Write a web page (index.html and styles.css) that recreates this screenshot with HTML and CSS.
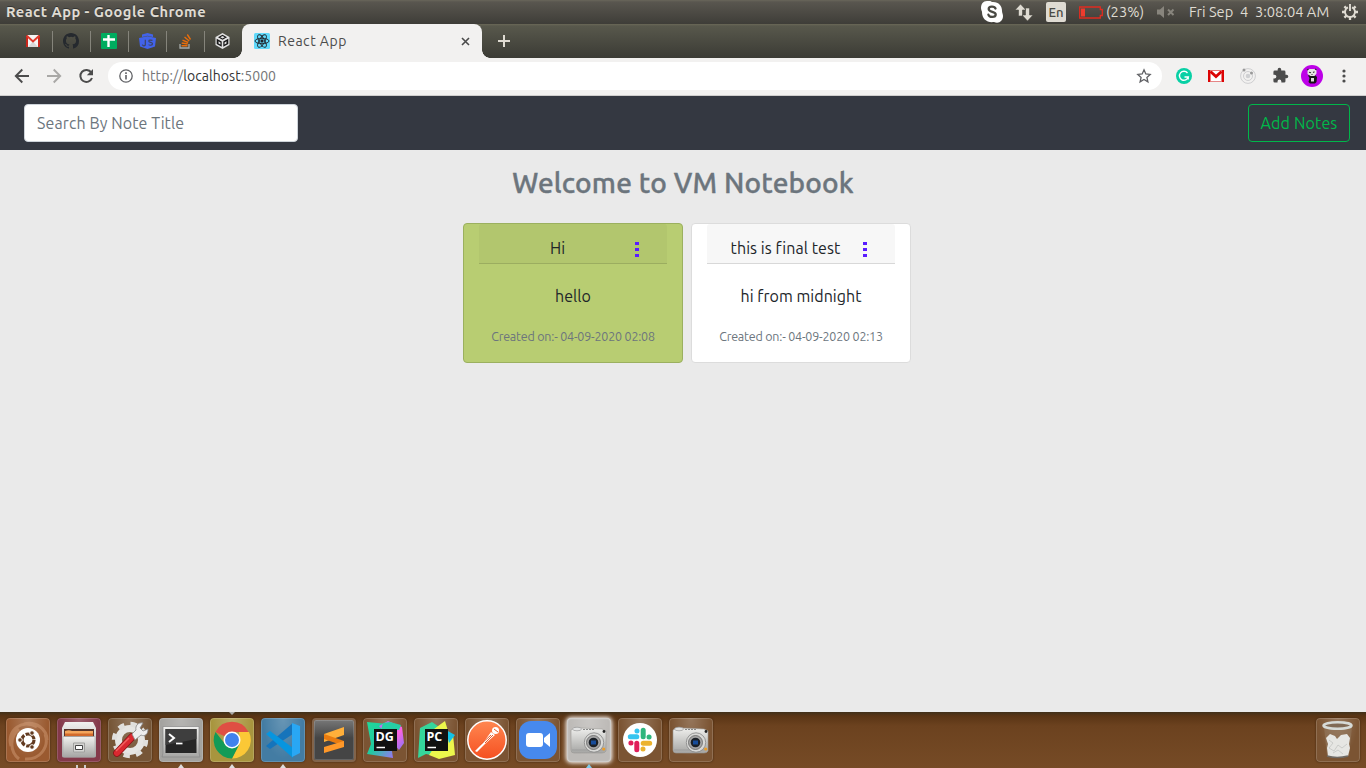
FILE: index.html
```html
<!DOCTYPE html>
<html lang="en">
<head>
<meta charset="utf-8">
<title>React App</title>
<link rel="stylesheet" href="styles.css">
</head>
<body>
<header class="panel">
  <span class="window-title">React App - Google Chrome</span>
  <div class="tray">
    <svg class="tray-skype" width="22" height="22" viewBox="0 0 22 22"><path d="M6 0c3-1 4 1 6 1 6 0 9 4 9 9 0 2 1 3 1 5 0 5-4 8-9 6-7 1-12-3-12-10 0-1-1-2-1-4C0 3 2 0 6 0Z" fill="#fff"/><path d="M14.500 7.500C13.500 4.800 7.700 4.900 7.700 8c0 3.600 7 2.200 7 5.500 0 3.200-6.400 3.300-7.300.2" fill="none" stroke="#4a4943" stroke-width="2.300" stroke-linecap="round"/></svg>
    <svg class="tray-net" width="18" height="17" viewBox="0 0 18 17"><path d="M5.500 0 11 6H7.500v6h-4V6H0ZM12.500 17 7 11h3.500V4h4v7H18Z" fill="#dfdbd2" stroke="#4b4943" stroke-width=".6"/></svg>
    <span class="lang">En</span>
    <svg class="tray-battery" width="24" height="13" viewBox="0 0 24 13"><path d="M.7 1h20.600v2.500H23.300v6H21.300V12H.7Z" fill="none" stroke="#e02b20" stroke-width="1.300"/><path d="M2 2.500h4v8H2z" fill="#ed3b2d"/></svg>
    <span class="percent">(23%)</span>
    <svg class="tray-sound" width="18" height="12" viewBox="0 0 18 12"><path d="M0 3.500h3L7 0v12L3 8.500H0Z" fill="#88857d"/><path d="m11 3.500 5.500 5.500m0-5.500L11 9" stroke="#88857d" stroke-width="2"/></svg>
    <span class="clock">Fri Sep  4  3:08:04 AM</span>
    <svg class="tray-gear" width="16" height="16" viewBox="-8 -8 16 16" fill="none" stroke="#dfdbd2"><path d="M-2-4.600A5 5 0 1 0 2-4.600" stroke-width="1.900"/><path d="M0-8v7" stroke-width="1.900"/><path d="M5 0h3M-5 0h-3M0 5v3M3.600 3.600l2 2M-3.600 3.600l-2 2M3.600-3.600l2-2M-3.600-3.600l-2-2" stroke-width="2.300"/></svg>
  </div>
</header>

<nav class="tabs">
  <span class="pin"><svg width="14" height="12" viewBox="0 0 14 12"><path d="M1 0h12v12H1z" fill="#f4f4f4"/><path d="m2 12 5-5.500 5 5.500" fill="#d8d8d8"/><path d="M0 .5h2V12H0zM12 .5h2V12h-2z" fill="#c9271c"/><path d="m.8.800 6.200 5.700L13.200.8" fill="none" stroke="#e0392b" stroke-width="2"/></svg></span>
  <span class="pin"><svg width="16" height="16" viewBox="0 0 16 16"><path fill="#25292e" d="M8 0C3.580 0 0 3.580 0 8c0 3.540 2.290 6.530 5.470 7.590.4.070.55-.17.55-.38 0-.19-.01-.82-.01-1.490-2.010.37-2.530-.49-2.690-.94-.09-.23-.48-.94-.82-1.130-.28-.15-.68-.52-.01-.53.63-.01 1.080.58 1.230.82.72 1.210 1.870.87 2.330.66.07-.52.28-.87.51-1.070-1.780-.2-3.640-.89-3.640-3.950 0-.87.31-1.590.82-2.150-.08-.2-.36-1.020.08-2.120 0 0 .67-.21 2.200.82a7.500 7.500 0 0 1 4 0c1.530-1.040 2.200-.82 2.200-.82.44 1.100.16 1.920.08 2.120.51.56.82 1.270.82 2.150 0 3.070-1.870 3.750-3.650 3.950.29.25.54.73.54 1.480 0 1.070-.01 1.930-.01 2.200 0 .21.15.46.55.38A8 8 0 0 0 16 8c0-4.420-3.580-8-8-8Z"/></svg></span>
  <span class="pin"><svg width="16" height="16" viewBox="0 0 16 16"><rect width="16" height="16" rx="1" fill="#00ac5f"/><path d="M2 6.500h12M7.500 2v12" stroke="#fff" stroke-width="2.400"/></svg></span>
  <span class="pin"><svg width="17" height="16" viewBox="0 0 17 16"><path d="M3 1.500 8.500 0 14 1.500V4L8.500 2.800 3 4ZM0 5l8.500-1.700L17 5l-1 8.500L8.500 16 1 13.500Z" fill="#4263eb"/><path d="M6.300 6.800v5.200q-1.500 1.800-3-.3M13.500 7.300q-3.700-.8-3.700 1c0 1.700 3.700.5 3.700 2.400 0 1.800-2.700 1.900-3.900.9" fill="none" stroke="#3e4664" stroke-width="1.200"/></svg></span>
  <span class="pin"><svg width="13" height="16" viewBox="0 0 13 16" fill="none"><path d="M1 11v4h9v-4" stroke="#a5aaa9" stroke-width="1.300"/><path d="M2.500 12.700h6M2.700 10l6 1M3.500 7.200l5.700 2.300M5.500 4l4.700 4M8.300 1.500l3.200 5" stroke="#e86d0b" stroke-width="1.400"/></svg></span>
  <span class="pin"><svg width="15" height="16" viewBox="0 0 15 16"><path d="m7.500 0 7 4v8l-7 4-7-4V4Z" fill="#e2e2e2"/><path d="m7.500 1.800 4.500 2.500-4.500 2.400L3 4.300Z" fill="#171717"/><path d="m7.500 3 2.200 1.300-2.200 1.200-2.200-1.200Z" fill="#e2e2e2"/><path d="m1.700 5.800 5 2.700v5.300l-5-2.800ZM13.300 5.800l-5 2.700v5.300l5-2.800Z" fill="#171717"/><path d="m3.500 8.300 2 1.200v2l-2-1.100ZM11.500 8.300l-2 1.200v2l2-1.100Z" fill="#e2e2e2"/></svg></span>
  <div class="tab">
    <svg width="16" height="16" viewBox="-8 -8 16 16" fill="none" stroke="#20232a" stroke-width=".9"><rect x="-8" y="-8" width="16" height="16" rx="1.500" fill="#61dafb" stroke="none"/><ellipse rx="7" ry="2.700"/><ellipse rx="7" ry="2.700" transform="rotate(60)"/><ellipse rx="7" ry="2.700" transform="rotate(120)"/><circle r="1.200" fill="#20232a"/></svg>
    <span class="tab-name">React App</span>
    <svg class="close" width="9" height="9" viewBox="0 0 9 9"><path d="m1 1 7 7m0-7L1 8" stroke="#4b4b4b" stroke-width="1.600"/></svg>
  </div>
  <svg class="plus" width="12" height="12" viewBox="0 0 12 12"><path d="M0 6h12M6 0v12" stroke="#dfdbd2" stroke-width="2"/></svg>
</nav>

<div class="toolbar">
  <span class="tool"><svg width="16" height="16" viewBox="0 0 16 16"><path d="M15 8H2m6.300-6.500L1.800 8l6.500 6.500" fill="none" stroke="#4c4c4c" stroke-width="1.900"/></svg></span>
  <span class="tool"><svg width="16" height="16" viewBox="0 0 16 16"><path d="M1 8h13M7.700 1.500 14.200 8l-6.500 6.500" fill="none" stroke="#a9a8a6" stroke-width="1.900"/></svg></span>
  <span class="tool"><svg width="16" height="16" viewBox="0 0 16 16"><path d="M13.300 4.500A6 6 0 1 0 14 10" fill="none" stroke="#4c4c4c" stroke-width="2"/><path d="M15 1v6.200H8.800Z" fill="#4c4c4c"/></svg></span>
  <div class="omnibox">
    <svg width="14" height="14" viewBox="0 0 14 14"><circle cx="7" cy="7" r="6.200" fill="none" stroke="#5f6064" stroke-width="1.300"/><path d="M7 6v4.500M7 3.300v1.600" stroke="#5f6064" stroke-width="1.600"/></svg>
    <span class="url">http://<b>localhost</b>:5000</span>
    <svg class="star" width="16" height="16" viewBox="0 0 16 16"><path d="m8 1.800 1.800 4.100 4.400.5-3.300 3 1 4.400L8 11.500l-3.900 2.300 1-4.400-3.300-3 4.400-.5Z" fill="none" stroke="#5f6064" stroke-width="1.300"/></svg>
  </div>
  <span class="tool"><svg width="16" height="16" viewBox="0 0 16 16"><circle cx="8" cy="8" r="8" fill="#08d0a5"/><path d="M11.500 5A4.500 4.500 0 1 0 12.300 9H8.500m3.700-.5v3" fill="none" stroke="#fff" stroke-width="1.400"/></svg></span>
  <span class="tool"><svg width="16" height="12" viewBox="0 0 16 12"><path d="M0 0h16v12H0z" fill="#fff"/><path d="M0 0h2.500v12H0zM13.500 0H16v12h-2.500z" fill="#dc0404"/><path d="m2.500 1.500 5.500 5 5.500-5" fill="none" stroke="#dc0404" stroke-width="2.800"/><path d="M2 .5h12M2.500 11.600h11" stroke="#e06a6a" stroke-width=".9"/></svg></span>
  <span class="tool"><svg width="16" height="16" viewBox="0 0 16 16"><g fill="none" stroke="#ceced0"><circle cx="8" cy="8" r="7.400"/><circle cx="8" cy="8" r="4.500"/></g><circle cx="8" cy="8" r="2.300" fill="#cfd0d2"/><circle cx="4" cy="2" r="1.500" fill="#999"/><circle cx="11.500" cy="5" r="1.500" fill="#999"/></svg></span>
  <span class="tool"><svg width="17" height="17" viewBox="0 0 24 24"><path fill="#4c4c4c" d="M20.500 11H19V7a2 2 0 0 0-2-2h-4V3.500a2.500 2.500 0 0 0-5 0V5H4a2 2 0 0 0-2 2v3.800h1.500a2.700 2.700 0 0 1 0 5.400H2V20a2 2 0 0 0 2 2h3.800v-1.500a2.700 2.700 0 0 1 5.400 0V22H17a2 2 0 0 0 2-2v-4h1.500a2.500 2.500 0 0 0 0-5Z"/></svg></span>
  <span class="tool"><svg width="22" height="22" viewBox="0 0 22 22"><circle cx="11" cy="11" r="11" fill="#bd00e8"/><path d="M7 10.500 8.500 10H14l2 2-.5 5L14 18.500H9L7.500 17l1-4Z" fill="#151515"/><path d="M6.500 5.500 8.500 4h5l2 1.500v3L13.500 11h-4l-3-2Z" fill="#e4e4e4"/><path d="M10 13h3v3.500h-3Z" fill="#ddd"/><path d="m8 7.200 2 .6M13.500 6.700l-1.500.7M10.500 9.500h1M6 5l1.500-1M14 4l1.500.8" stroke="#333" stroke-width="1.100"/></svg></span>
  <span class="tool more"><svg width="4" height="14" viewBox="0 0 4 14"><g fill="#4c4c4c"><circle cx="2" cy="2" r="1.600"/><circle cx="2" cy="7" r="1.600"/><circle cx="2" cy="12" r="1.600"/></g></svg></span>
</div>

<div class="navbar">
  <input class="search" type="text" placeholder="Search By Note Title">
  <button class="add">Add Notes</button>
</div>

<main class="page">
  <h1 class="heading"><span>Welcome to VM Notebook</span></h1>
  <section class="notes">
    <article class="note green">
      <div class="note-head"><span class="note-title">Hi</span><span class="dots"><i></i><i></i><i></i></span></div>
      <p class="note-body">hello</p>
      <p class="note-date">Created on:- 04-09-2020 02:08</p>
    </article>
    <article class="note">
      <div class="note-head"><span class="note-title">this is final test</span><span class="dots"><i></i><i></i><i></i></span></div>
      <p class="note-body">hi from midnight</p>
      <p class="note-date">Created on:- 04-09-2020 02:13</p>
    </article>
  </section>
</main>

<footer class="dock">
  <svg width="0" height="0" class="defs">
    <defs>
      <linearGradient id="silver" x2="0" y2="1"><stop stop-color="#f1f1ef"/><stop offset="1" stop-color="#a5a5a3"/></linearGradient>
      <linearGradient id="mint" x2="1" y2="1"><stop stop-color="#20d99a"/><stop offset=".5" stop-color="#21c9a0"/><stop offset="1" stop-color="#9875f4"/></linearGradient>
      <linearGradient id="pink" x2="1" y2="1"><stop stop-color="#b66cf4"/><stop offset=".6" stop-color="#fb62e1"/><stop offset="1" stop-color="#8376f8"/></linearGradient>
      <linearGradient id="orange" x2="0" y2="1"><stop stop-color="#ff8751"/><stop offset="1" stop-color="#f55021"/></linearGradient>
      <symbol id="camera" viewBox="0 0 38 30">
        <path d="M1 5q5-4 9-2l22 1 4 2v20q-1 2-4 2H4q-3 0-3-3Z" fill="url(#silver)" stroke="#9b9996" stroke-width=".6"/>
        <path d="M2 25h33" stroke="#999" stroke-width=".8"/><ellipse cx="7" cy="4" rx="4.500" ry="1.800" fill="#e2e2e2" stroke="#999" stroke-width=".7"/><path d="M13 4.500h12" stroke="#888" stroke-dasharray="2 1"/>
        <circle cx="24" cy="17.500" r="9.700" fill="#d8d8d6" stroke="#858585" stroke-width=".8"/><circle cx="23.500" cy="17.500" r="7" fill="#a5a5a5" stroke="#666" stroke-width=".8"/><circle cx="23.500" cy="17.500" r="4.800" fill="#1b2027"/><path d="M21 15.500h5v4h-5z" fill="#164c9b"/><circle cx="34" cy="6.500" r="1.400" fill="#222"/><circle cx="33.700" cy="24" r="1.600" fill="#ed9d26"/>
      </symbol>
    </defs>
  </svg>
  <span class="tile ubuntu"><svg width="44" height="44" viewBox="0 0 44 44"><g fill="none" stroke="#d6a27c" stroke-width="3" opacity=".45"><path d="M5 28C0 12 17 0 31 9M13 41C3 33 4 18 13 11M39 16c5 14-6 26-20 25M18 6c12-3 23 5 23 16"/></g><circle cx="22" cy="22" r="12" fill="#fff"/><circle cx="22" cy="22" r="6" fill="none" stroke="#623a20" stroke-width="3.200" stroke-dasharray="11 1.570"/><g fill="#623a20" stroke="#fff"><circle cx="14" cy="22" r="2.300"/><circle cx="26" cy="15" r="2.300"/><circle cx="26" cy="29" r="2.300"/></g></svg></span>
  <span class="tile files"><svg width="44" height="44" viewBox="0 0 44 44"><path d="M8 4h28l3 6v28q0 1.500-2 1.500H7q-2 0-2-1.500V10Z" fill="url(#silver)"/><path d="M7 11h30v8H7Z" fill="#57352a"/><path d="M8 13q4-1.500 7 0h21v5H8Z" fill="#f4a65d"/><path d="M8 15.500h28V18H8Z" fill="#d26a2c"/><path d="M6 18.500h32V38q0 1-2 1H8q-2 0-2-1Z" fill="url(#silver)" stroke="#aaa" stroke-width=".6"/><path d="M16.500 25h11v9h-11z" fill="#d5d5d3" stroke="#a0a09e"/><path d="M18.500 27.500h7v4h-7z" fill="#fff" stroke="#444"/></svg></span>
  <span class="tile settings"><svg width="44" height="44" viewBox="0 0 44 44"><circle cx="22" cy="22" r="11.500" fill="none" stroke="#e6e6e3" stroke-width="7"/><circle cx="22" cy="22" r="15.700" fill="none" stroke="#e0e0dd" stroke-width="5" stroke-dasharray="6.200 6.130"/><path d="m9 35 15-16" stroke="#8b1015" stroke-width="7.500" stroke-linecap="round"/><path d="m9 35 15-16" stroke="#da2930" stroke-width="6" stroke-linecap="round"/><path d="m8 33 13-13" stroke="#f16360" stroke-width="1.500"/><path d="m24 16 4-4c-1-4 2-8 7-7l-3 5 3 3 5-2c0 5-3 8-7 6l-6 5Z" fill="#eee" stroke="#888" stroke-width=".8"/></svg></span>
  <span class="tile terminal up"><svg width="44" height="44" viewBox="0 0 44 44"><path d="M4 8.500h36V35l1 4H3l1-4Z" fill="url(#silver)" stroke="#888" stroke-width=".7"/><path d="M6.500 11h31v24h-31Z" fill="#262626"/><path d="M6.500 11h31v10l-31 6Z" fill="#3e3e3e"/><path d="m10 16 5 4-5 4" fill="none" stroke="#fff" stroke-width="2"/><path d="M17 25.500h6.500" stroke="#fff" stroke-width="1.700"/></svg></span>
  <span class="tile chrome up"><svg width="44" height="44" viewBox="-22 -22 44 44"><path d="M-16.500-8A18.500 18.500 0 0 1 16.500-8H0l-8 4Z" fill="#df4f43"/><path d="M17-8A18.500 18.500 0 0 1 0 18.500L7.500 4 7-8Z" fill="#fbc836"/><path d="M-16.500-8A18.500 18.500 0 0 0 0 18.500L7 5-7 4Z" fill="#129b57"/><circle r="8.500" fill="#fff"/><circle r="7" fill="#4182ed"/></svg></span>
  <span class="tile code up"><svg width="44" height="44" viewBox="0 0 44 44"><path d="m5 28 27-23v11L9 31Z" fill="#1674bb"/><path d="m5 16 4-3 23 17v10Z" fill="#0795df"/><path d="m31 5 8 3v27l-8 4Z" fill="#29a7f4"/></svg></span>
  <span class="tile sublime"><svg width="44" height="44" viewBox="0 0 44 44"><path d="m12 16 20-7v8l-20 7Z" fill="#ffaf3a"/><path d="m12 16 20 7v5l-20-7Z" fill="#e97b10"/><path d="m12 29 20-6v6l-20 6Z" fill="#ff9829"/></svg></span>
  <span class="tile"><svg width="44" height="44" viewBox="0 0 44 44"><path d="m4 4 21 2 5 34-26-4 4-10Z" fill="url(#mint)"/><path d="m16 8 9-5 14 6 2 16-5 7Z" fill="url(#pink)"/><path d="m20 5 7-1 11 3-2 5H18Z" fill="#25cfa4"/><path d="M11 11h23v22H11z" fill="#111"/><path d="M13.500 29.500H22" stroke="#fff" stroke-width="1.500"/><text x="12.500" y="23" class="logo-text">DG</text></svg></span>
  <span class="tile"><svg width="44" height="44" viewBox="0 0 44 44"><path d="m6 10 12-6 13 9-6 26-13-3-8 4Z" fill="#35d69b"/><path d="m20 11 11-8 3 10ZM30 15l9 1 2 21-16 4-10-4Z" fill="#ecf64c"/><path d="m32 12 9 5-6 8Z" fill="#12c3e8"/><path d="M11 11h23v22H11z" fill="#111"/><path d="M13.500 29.500H22" stroke="#fff" stroke-width="1.500"/><text x="12.500" y="23" class="logo-text">PC</text></svg></span>
  <span class="tile"><svg width="44" height="44" viewBox="0 0 44 44"><circle cx="22" cy="22" r="19.200" fill="url(#orange)" stroke="#fff" stroke-width="1.500"/><circle cx="30.500" cy="12.500" r="3.500" fill="#fff"/><path d="m26 14 4 3-10 9-8 8-2-1 8-8Z" fill="#fff"/><path d="m15 27 11-10m-6 8 8-8M29 11l4 3" stroke="#e55b2b"/></svg></span>
  <span class="tile"><svg width="44" height="44" viewBox="0 0 44 44"><rect x="3" y="3" width="38" height="38" rx="12" fill="#4789ed"/><rect x="10" y="15" width="17" height="14" rx="3" fill="#fff"/><path d="m28 20 6-5v14l-6-5Z" fill="#fff"/></svg></span>
  <span class="tile active up"><svg width="38" height="30"><use href="#camera"/></svg></span>
  <span class="tile"><svg width="44" height="44" viewBox="-22 -22 44 44"><circle r="17" fill="#fff"/><g stroke-width="5" stroke-linecap="round"><path d="M-3.200-3.200h-6.500M-3-9v-.1" stroke="#36c5f0"/><path d="M3.200-3.200v-6.500M9-3h.1" stroke="#2eb67d"/><path d="M3.200 3.200h6.500M3 9v.1" stroke="#ecb22e"/><path d="M-3.200 3.200v6.500M-9 3h-.1" stroke="#e01e5a"/></g></svg></span>
  <span class="tile"><svg width="38" height="30"><use href="#camera"/></svg></span>
  <span class="tile trash"><svg width="44" height="44" viewBox="0 0 44 44"><path d="m8 9 3 29q11 3 22 0l3-29Z" fill="#a08b76" opacity=".35"/><path d="m10 20 4-4 5 2 2 3 4-4 6-1 3 4-1 6 1 4-2 8q-10 3-20 0l-1-8 1-4Z" fill="#e6e6e3"/><path d="m13 22 4 3-4 5 5 3 4-6 4 3 5-4M17 35l5-3 5 4" fill="none" stroke="#c3c4c1" stroke-width=".8"/><ellipse cx="21.500" cy="7.500" rx="14" ry="3.200" fill="#806a56" stroke="#d6dad7" stroke-width="2.500"/><path d="M11 38q10 3 21 0" stroke="#6f6a65" stroke-width="1.500" fill="none"/></svg></span>
</footer>
</body>
</html>
```
FILE: styles.css
```css
* { box-sizing: border-box; }
body { margin: 0; width: 1366px; height: 768px; overflow: hidden; display: flex; flex-direction: column; background: #eaeaea; font-family: Ubuntu, "Noto Sans", sans-serif; }
svg { display: block; flex: none; }
span, button { white-space: nowrap; }

.panel { height: 24px; flex: none; display: flex; align-items: center; justify-content: space-between; padding: 0 8px 0 6px; background: linear-gradient(#69665a 0, #59564f 2px, #3e3d38 24px); color: #dfdbd2; font-size: 14.670px; line-height: 24px; }
.window-title { font-weight: 700; letter-spacing: .45px; text-shadow: 0 -1px #333; }
.tray { display: flex; align-items: center; height: 24px; }
.tray-net { margin-left: 12px; }
.lang { width: 20px; height: 20px; margin-left: 13px; border-radius: 2px; background: #dfdbd2; color: #4a4943; font-size: 13px; font-weight: 500; line-height: 21px; text-align: center; }
.tray-battery { margin-left: 13px; }
.percent { width: 38px; margin-left: 3px; }
.tray-sound { margin-left: 13px; }
.clock { width: 140px; margin-left: 14px; white-space: pre; }
.tray-gear { margin-left: 13px; }

.tabs { height: 34px; flex: none; display: flex; align-items: center; padding-left: 15px; background: linear-gradient(#6a6857 0, #58584c 2px, #3b3b35 34px); }
.pin { width: 38px; height: 21px; display: flex; align-items: center; justify-content: center; padding-right: 1px; border-right: 1px solid #85847b; }
.pin:nth-child(6) { width: 37px; padding-right: 1px; border-color: transparent; }
.tab { position: relative; width: 240px; height: 34px; display: flex; align-items: center; padding: 0 12px; border-radius: 8px 8px 0 0; background: #f2f1f0; color: #4c4c4c; font-size: 14px; }
.tab::before, .tab::after { content: ""; position: absolute; bottom: 0; width: 8px; height: 8px; }
.tab::before { left: -8px; background: radial-gradient(circle at 0 0, transparent 7.500px, #f2f1f0 8px); }
.tab::after { right: -8px; background: radial-gradient(circle at 100% 0, transparent 7.500px, #f2f1f0 8px); }
.tab-name { margin-left: 8px; letter-spacing: .5px; }
.close { margin-left: auto; }
.plus { margin-left: 16px; }

.toolbar { height: 38px; flex: none; display: flex; align-items: center; padding: 0 5px 2px 6px; border-bottom: 1px solid #cfcecd; background: #f2f1f0; }
.tool { width: 32px; height: 32px; display: flex; align-items: center; justify-content: center; }
.omnibox { width: 1054px; height: 28px; display: flex; align-items: center; margin: 0 6px; padding: 0 10px 0 11px; border-radius: 14px; background: #fff; color: #747577; font-size: 14px; }
.url { margin-left: 9px; letter-spacing: .05px; }
.url b { font-weight: 400; color: #333; }
.star { margin-left: auto; }

.navbar { height: 54px; flex: none; display: flex; justify-content: space-between; align-items: center; padding: 0 16px 0 24px; background: #343841; }
.search { width: 274px; height: 38px; padding: 0 12px; border: 1px solid #ced4da; border-radius: 4px; background: #fff; font: 16px Ubuntu, "Noto Sans", sans-serif; letter-spacing: .1px; }
.search::placeholder { color: #6c757d; opacity: 1; }
.add { width: 102px; height: 38px; padding: 0; border: 1px solid #00b74a; border-radius: 4px; background: transparent; color: #00b74a; font: 16px Ubuntu, "Noto Sans", sans-serif; letter-spacing: .15px; }

.page { flex: 1; }
.heading { margin: 16px 0 23px; font-size: 28px; line-height: 34px; font-weight: 500; letter-spacing: .18px; text-align: center; color: #6c757d; -webkit-text-stroke: .4px #6c757d; }
.notes { display: flex; gap: 8px; padding-left: 463px; }
.note { width: 220px; height: 140px; padding: 0 15px; border: 1px solid #dcdcdc; border-radius: 4px; background: #fff; color: #212529; text-align: center; }
.green { border-color: #9bb05f; background: #b8cd72; }
.note-head { display: flex; height: 40px; padding: 12px 0 0 23px; border-bottom: 1px solid rgba(0,0,0,.13); border-radius: 3px 3px 0 0; background: rgba(0,0,0,.03); }
.note-title { flex: 0 0 111px; line-height: 24px; font-size: 16px; margin-right: 22px; letter-spacing: .07px; }
.dots { display: flex; flex-direction: column; gap: 3px; padding-top: 6px; }
.dots i { width: 4px; height: 3px; background: #5a1cff; }
.note-body { margin: 20px 0 0; font-size: 16px; line-height: 24px; letter-spacing: .04px; }
.note-date { margin: 18px 0 0; font-size: 12.500px; line-height: 20px; white-space: nowrap; color: #6c757d; letter-spacing: -.2px; }

.dock { height: 56px; flex: none; display: flex; gap: 7px; padding: 6px; background: linear-gradient(#40301a 0, #5a3515 4px, #6c421f 14px, #764b26); }
.defs { position: absolute; }
.tile { position: relative; width: 44px; height: 44px; flex: none; display: flex; align-items: center; justify-content: center; border-radius: 4px; background: radial-gradient(ellipse at 50% 0, rgba(255,255,255,.2), transparent 65%) #7b5433; box-shadow: inset 0 0 0 1px rgba(255,255,255,.16), 0 0 2px #3b230f; }
.ubuntu { background-color: #9a5a30; }
.files { background-color: #84394a; }
.settings { background-color: #765637; }
.terminal { background-color: #a4a3a0; }
.chrome { background-color: #a8953e; }
.code { background-color: #437ca3; }
.sublime { background: linear-gradient(#777, #454545 45%); border: 2px solid #82644b; }
.active { background-color: #bdbab7; box-shadow: inset 0 0 2px #fff, 0 0 4px 1px #fff; }
.up::after { content: ""; position: absolute; left: 19px; bottom: -6px; border: 3px solid transparent; border-top: 0; border-bottom: 4px solid #ddd; }
.active::after { border-bottom-color: #80cced; }
.chrome::before { content: ""; position: absolute; top: -6px; left: 19px; border: 3px solid transparent; border-bottom: 0; border-top-color: #aaa; }
.files::after { content: ""; position: absolute; bottom: -6px; left: 19px; width: 6px; height: 3px; border: solid #ccc; border-width: 0 2px; }
.trash { margin-left: auto; }
.logo-text { fill: #fff; font: 700 12.500px "Open Sans", sans-serif; }
```
